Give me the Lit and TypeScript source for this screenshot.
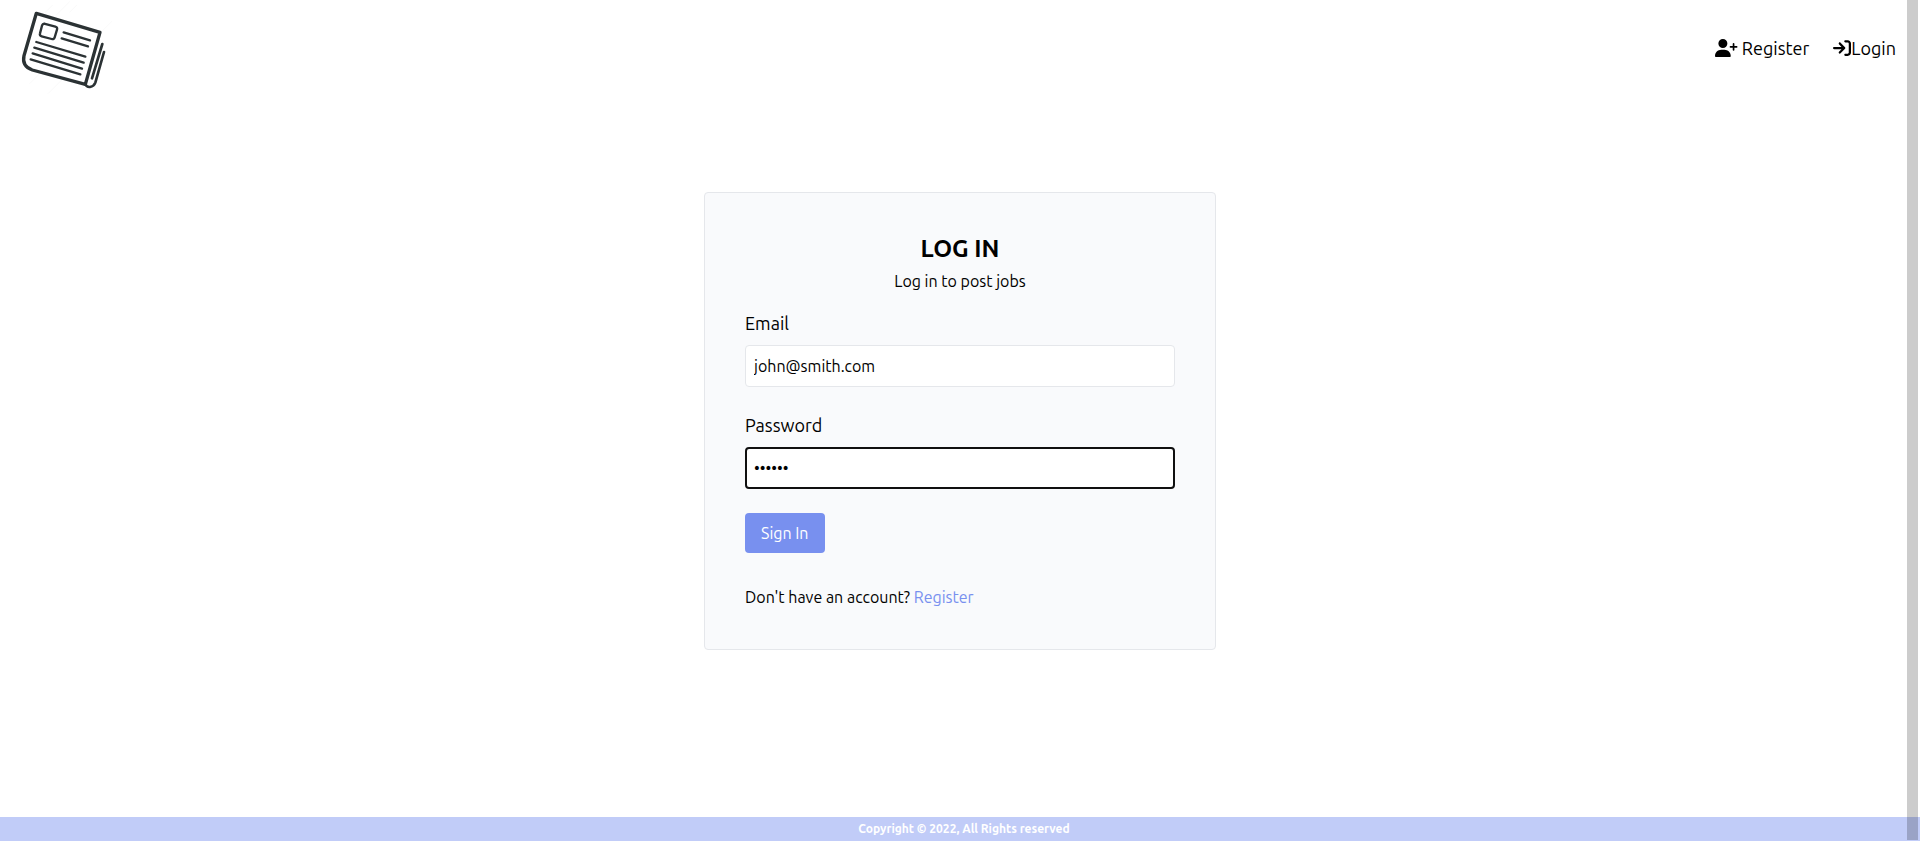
import { LitElement, html, css } from "lit";
import { customElement } from "lit/decorators.js";

@customElement("app-root")
export class AppRoot extends LitElement {
  static styles = css`
    :host {
      display: flex;
      flex-direction: column;
      min-height: 100vh;
      position: relative;
      background: #fff;
      color: #000;
      font-family: Ubuntu, "Noto Sans", sans-serif;
      font-size: 16px;
      line-height: 24px;
    }
    *,
    *::before,
    *::after {
      box-sizing: border-box;
    }
    h1,
    p,
    ul {
      margin: 0;
      padding: 0;
    }
    a {
      color: inherit;
      text-decoration: none;
    }
    .nav {
      display: flex;
      justify-content: space-between;
      align-items: center;
      height: 96px;
      padding-right: 24px;
    }
    .brand,
    .logo {
      display: block;
    }
    .links {
      display: flex;
      gap: 24px;
      list-style: none;
      font-size: 18px;
      line-height: 28px;
    }
    .links a {
      display: flex;
      align-items: center;
    }
    .spaced {
      gap: 4px;
    }
    .icon {
      height: 18px;
      fill: currentColor;
    }
    .main {
      flex: 1;
      padding: 96px 16px 48px;
    }
    .card {
      max-width: 512px;
      margin: 0 auto;
      padding: 40px;
      background: #f9fafc;
      border: 1px solid #e5e7eb;
      border-radius: 4px;
    }
    .head {
      text-align: center;
      margin-bottom: 16px;
    }
    .title {
      font-size: 24px;
      line-height: 32px;
      font-weight: 700;
      margin-bottom: 4px;
    }
    .field {
      margin-bottom: 24px;
    }
    .label {
      display: block;
      font-size: 18px;
      line-height: 28px;
      margin-bottom: 8px;
    }
    .input {
      display: block;
      width: 100%;
      height: 42px;
      padding: 0 8px;
      font: inherit;
      color: #000;
      background: #fff;
      border: 1px solid #e5e7eb;
      border-radius: 4px;
      outline: none;
    }
    .active {
      padding: 0 7px;
      border: 2px solid #101010;
    }
    .submit {
      display: block;
      height: 40px;
      padding: 0 16px;
      font: inherit;
      color: #fff;
      background: #7890ef;
      border: 0;
      border-radius: 4px;
      cursor: pointer;
    }
    .hint {
      margin-top: 32px;
    }
    .accent {
      color: #7890ef;
    }
    .footer {
      background: #c1ccf8;
      color: #fff;
      padding-left: 8px;
      text-align: center;
      font-size: 12px;
      line-height: 24px;
      font-weight: 700;
    }
    .scroll {
      position: absolute;
      top: 0;
      right: 2px;
      bottom: 1px;
      width: 11px;
      background: rgba(0, 0, 0, 0.2);
    }
  `;

  render() {
    return html`
      <nav class="nav">
        <a class="brand" href="#" aria-label="Home">
          <svg class="logo" width="112" height="96" viewBox="0 0 336 288" fill="none" stroke="#2b3234" stroke-linecap="round" stroke-linejoin="round">
            <path stroke="#fafafa" stroke-width="3" d="M135 38l22-22M170 44l38-38M210 36l20-20M300 100l38-38M90 250l40-40M145 280l50-50" />
            <path stroke-width="10" d="M109 40L300 97L256 253L97 210Q65 199 72 167Z" />
            <path stroke-width="8" d="M256 253Q260 262 270 261Q282 259 286 248L312 156M307 132L276 235" />
            <path stroke-width="7" d="M132 71L166 80Q173 82 171 89L164 112Q162 119 155 117L125 109Q118 107 120 100L126 77Q128 70 135 72Z" />
            <path stroke-width="7" d="M191 97L270 121M185 115L264 139M109 126L256 170M103 143L251 188M98 160L246 206M92 178L241 223" />
          </svg>
        </a>
        <ul class="links">
          <li>
            <a class="spaced" href="#register">
              <svg class="icon" viewBox="0 0 640 512" aria-hidden="true"><path d="M96 128a128 128 0 1 1 256 0A128 128 0 1 1 96 128zM0 482.3C0 383.8 79.8 304 178.3 304h91.4C368.2 304 448 383.8 448 482.3c0 16.4-13.3 29.7-29.7 29.7H29.7C13.3 512 0 498.7 0 482.3zM504 312V248H440c-13.3 0-24-10.7-24-24s10.7-24 24-24h64V136c0-13.3 10.7-24 24-24s24 10.7 24 24v64h64c13.3 0 24 10.7 24 24s-10.7 24-24 24H552v64c0 13.3-10.7 24-24 24s-24-10.7-24-24z" /></svg>
              Register
            </a>
          </li>
          <li>
            <a href="#login">
              <svg class="icon" viewBox="0 0 512 512" aria-hidden="true"><path d="M352 96l64 0c17.7 0 32 14.3 32 32l0 256c0 17.7-14.3 32-32 32l-64 0c-17.7 0-32 14.3-32 32s14.3 32 32 32l64 0c53 0 96-43 96-96l0-256c0-53-43-96-96-96l-64 0c-17.7 0-32 14.3-32 32s14.3 32 32 32zm-9.4 182.6c12.5-12.5 12.5-32.8 0-45.3l-128-128c-12.5-12.5-32.8-12.5-45.3 0s-12.5 32.8 0 45.3L242.7 224 32 224c-17.7 0-32 14.3-32 32s14.3 32 32 32l210.7 0-73.4 73.4c-12.5 12.5-12.5 32.8 0 45.3s32.8 12.5 45.3 0l128-128z" /></svg>
              Login
            </a>
          </li>
        </ul>
      </nav>
      <main class="main">
        <div class="card">
          <header class="head">
            <h1 class="title">LOG IN</h1>
            <p>Log in to post jobs</p>
          </header>
          <form @submit=${(e: Event) => e.preventDefault()}>
            <div class="field">
              <label class="label" for="email">Email</label>
              <input class="input" id="email" type="email" name="email" value="john@smith.com" />
            </div>
            <div class="field">
              <label class="label" for="password">Password</label>
              <input class="input active" id="password" type="password" name="password" value="secret" />
            </div>
            <button class="submit" type="submit">Sign In</button>
            <p class="hint">Don't have an account? <a class="accent" href="#register">Register</a></p>
          </form>
        </div>
      </main>
      <footer class="footer">Copyright © 2022, All Rights reserved</footer>
      <div class="scroll" aria-hidden="true"></div>
    `;
  }
}
